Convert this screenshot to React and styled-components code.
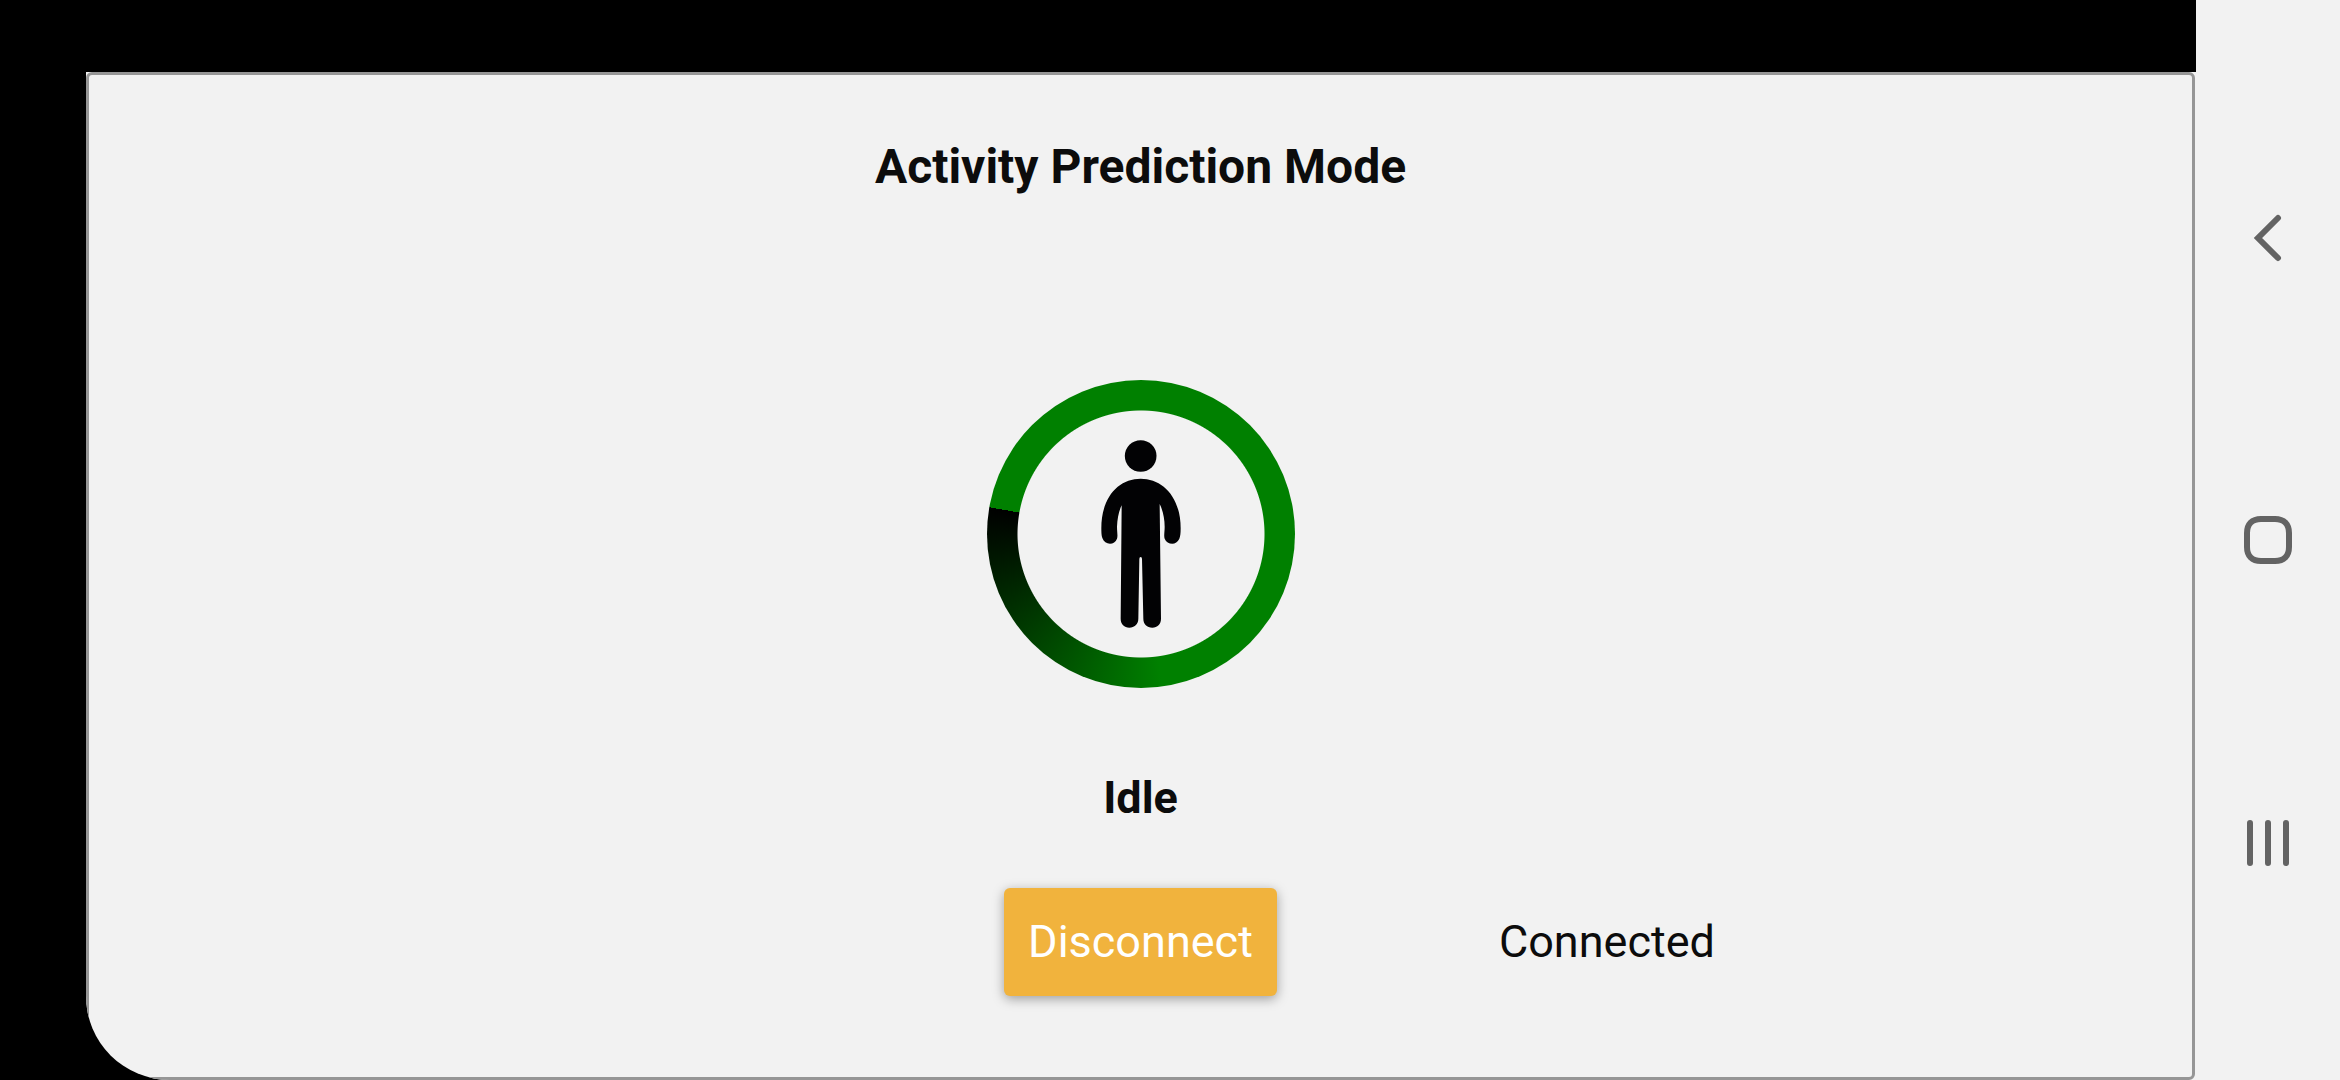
import React from "react";
import styled, { createGlobalStyle } from "styled-components";

const GlobalStyle = createGlobalStyle`
  *, *::before, *::after { box-sizing: border-box; }
  html, body, #root { height: 100%; }
  body {
    margin: 0;
    background: #000;
    color: #0c0c0c;
    font-family: Roboto, "Liberation Sans", sans-serif;
  }
`;

const Device = styled.div`
  display: flex;
  min-height: 100%;
`;

const Viewport = styled.div`
  flex: 1;
  display: flex;
  padding: 72px 0 0 86px;
`;

const Screen = styled.div`
  flex: 1;
  display: flex;
  padding-right: 1px;
  overflow: hidden;
  background: #f2f2f2;
  border-bottom-left-radius: 84px;
`;

const Card = styled.main`
  flex: 1;
  display: flex;
  flex-direction: column;
  align-items: center;
  padding: 60px 0 0;
  border: 3px solid #969696;
  border-radius: 6px;
`;

const Title = styled.h1`
  margin: 0;
  font-size: 48px;
  line-height: 64px;
  font-weight: 700;
`;

const Ring = styled.div`
  display: grid;
  place-items: center;
  width: 308px;
  height: 308px;
  margin: 181px 0 80px;
  border-radius: 50%;
  background:
    radial-gradient(circle closest-side, #f2f2f2 123px, transparent 124px),
    conic-gradient(#008000 172deg, #000 280deg, #008000 280deg);
`;

const Activity = styled.h2`
  margin: 0;
  font-size: 45px;
  line-height: 60px;
  font-weight: 700;
`;

const Controls = styled.div`
  display: grid;
  grid-template-columns: 1fr auto 1fr;
  column-gap: 222px;
  align-items: center;
  align-self: stretch;
  margin-top: 60px;
`;

const ActionButton = styled.button`
  grid-column: 2;
  padding: 24px;
  border: 0;
  border-radius: 6px;
  background: #f1b33d;
  color: #fff;
  font: 400 45px/60px Roboto, "Liberation Sans", sans-serif;
  box-shadow: 0 3px 12px rgba(0, 0, 0, 0.35);
`;

const Status = styled.p`
  margin: 0;
  font-size: 45px;
  line-height: 60px;
`;

const NavBar = styled.nav`
  display: flex;
  flex-direction: column;
  justify-content: center;
  width: 144px;
  background: #f2f2f2;
`;

const NavButton = styled.button`
  display: grid;
  place-items: center;
  height: 302px;
  padding: 0;
  border: 0;
  background: none;
  color: #636363;
`;

const NavIcon = ({ children }) => (
  <svg width="48" height="48" viewBox="0 0 48 48" fill="none" stroke="currentColor" strokeWidth="6" aria-hidden="true">
    {children}
  </svg>
);

const StandingPerson = () => (
  <svg width="80" height="188" viewBox="426 240 240 564" fill="#020204" role="img" aria-label="Standing person">
    <circle cx="545" cy="288" r="47.5" />
    <path d="M545 356C610 356 665 410 665 505C665 520 664 530 661 536C656 546 648 551 640 551C630 551 621 546 617 536C614 528 617 515 617 500C617 475 611 450 602 432L606 776C606 792 595 803 580 803C564 803 553 792 553 776L549 597Q549 591 545 591Q541 591 541 597L538 776C538 792 526 803 511 803C496 803 485 792 485 776L488 436C480 452 475 475 474 500C474 515 477 528 474 536C470 546 462 551 453 551C443 551 434 545 430 534C427 527 427 515 427 505C427 410 480 356 545 356Z" />
  </svg>
);

export default function App() {
  return (
    <>
      <GlobalStyle />
      <Device>
        <Viewport>
          <Screen>
            <Card>
              <Title>Activity Prediction Mode</Title>
              <Ring>
                <StandingPerson />
              </Ring>
              <Activity>Idle</Activity>
              <Controls>
                <ActionButton type="button">Disconnect</ActionButton>
                <Status>Connected</Status>
              </Controls>
            </Card>
          </Screen>
        </Viewport>
        <NavBar>
          <NavButton type="button" aria-label="Back">
            <NavIcon>
              <path d="M33 4L13 24L33 44" transform="translate(1 0)" strokeLinecap="round" />
            </NavIcon>
          </NavButton>
          <NavButton type="button" aria-label="Home">
            <NavIcon>
              <path d="M17 3H31C40 3 45 8 45 17V31C45 40 40 45 31 45H17C8 45 3 40 3 31V17C3 8 8 3 17 3Z" />
            </NavIcon>
          </NavButton>
          <NavButton type="button" aria-label="Recent apps">
            <NavIcon>
              <path d="M6 5V45M24 5V45M42 5V45" strokeLinecap="round" />
            </NavIcon>
          </NavButton>
        </NavBar>
      </Device>
    </>
  );
}
